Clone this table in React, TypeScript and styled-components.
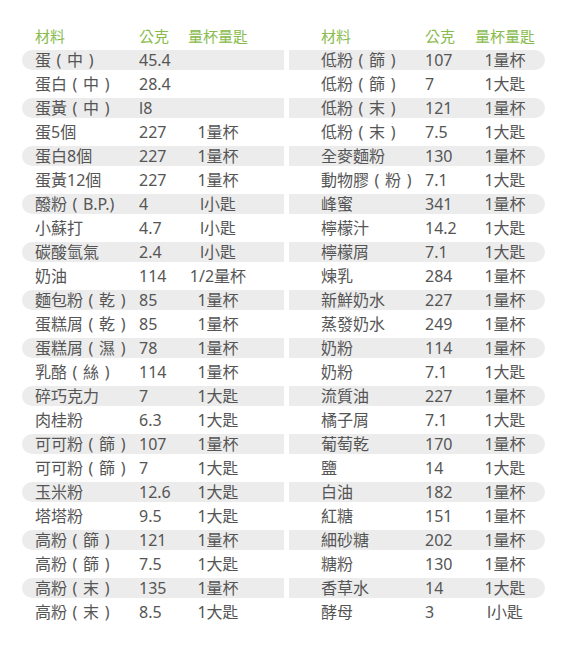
import React from 'react';
import styled, {createGlobalStyle} from 'styled-components';

type Item = [string, string, string]

const leftItems: Item[] = [
    ['蛋（中）', '45.4', ''],
    ['蛋白（中）', '28.4', ''],
    ['蛋黃（中）', 'l8', ''],
    ['蛋5個', '227', '1量杯'],
    ['蛋白8個', '227', '1量杯'],
    ['蛋黃12個', '227', '1量杯'],
    ['醱粉（B.P.)', '4', 'l小匙'],
    ['小蘇打', '4.7', 'l小匙'],
    ['碳酸氫氣', '2.4', 'l小匙'],
    ['奶油', '114', '1/2量杯'],
    ['麵包粉（乾）', '85', '1量杯'],
    ['蛋糕屑（乾）', '85', '1量杯'],
    ['蛋糕屑（濕）', '78', '1量杯'],
    ['乳酪（絲）', '114', '1量杯'],
    ['碎巧克力', '7', '1大匙'],
    ['肉桂粉', '6.3', '1大匙'],
    ['可可粉（篩）', '107', '1量杯'],
    ['可可粉（篩）', '7', '1大匙'],
    ['玉米粉', '12.6', '1大匙'],
    ['塔塔粉', '9.5', '1大匙'],
    ['高粉（篩）', '121', '1量杯'],
    ['高粉（篩）', '7.5', '1大匙'],
    ['高粉（末）', '135', '1量杯'],
    ['高粉（末）', '8.5', '1大匙'],
]

const rightItems: Item[] = [
    ['低粉（篩）', '107', '1量杯'],
    ['低粉（篩）', '7', '1大匙'],
    ['低粉（末）', '121', '1量杯'],
    ['低粉（末）', '7.5', '1大匙'],
    ['全麥麵粉', '130', '1量杯'],
    ['動物膠（粉）', '7.1', '1大匙'],
    ['峰蜜', '341', '1量杯'],
    ['檸檬汁', '14.2', '1大匙'],
    ['檸檬屑', '7.1', '1大匙'],
    ['煉乳', '284', '1量杯'],
    ['新鮮奶水', '227', '1量杯'],
    ['蒸發奶水', '249', '1量杯'],
    ['奶粉', '114', '1量杯'],
    ['奶粉', '7.1', '1大匙'],
    ['流質油', '227', '1量杯'],
    ['橘子屑', '7.1', '1大匙'],
    ['葡萄乾', '170', '1量杯'],
    ['鹽', '14', '1大匙'],
    ['白油', '182', '1量杯'],
    ['紅糖', '151', '1量杯'],
    ['細砂糖', '202', '1量杯'],
    ['糖粉', '130', '1量杯'],
    ['香草水', '14', '1大匙'],
    ['酵母', '3', 'l小匙'],
]

type Side = 'left' | 'right'

const columns: Record<Side, string> = {
    left: '104px 45px 68px 32px',
    right: '104px 45px 70px 5px',
}

// full-width brackets drawn centred in their cell, like the source font does
const Name = ({text}: { text: string }) => {
    const parts = text.split(/([（）])/)
    return (
        <>
            {parts.map((p, i) => p === '（' || p === '）'
                ? <Paren key={i}>{p === '（' ? '(' : ')'}</Paren>
                : <React.Fragment key={i}>{p}</React.Fragment>)}
        </>
    )
}

const TablePart = ({side, items}: { side: Side, items: Item[] }) => {
    return (
        <Table side={side}>
            <Row side={side}>
                <HeadCell>材料</HeadCell>
                <HeadCell>公克</HeadCell>
                <HeadCell center>量杯量匙</HeadCell>
            </Row>
            {items.map((item, i) => (
                <Row key={i} side={side} shaded={i % 2 === 0}>
                    <Cell><Name text={item[0]}/></Cell>
                    <Cell>{item[1]}</Cell>
                    <Cell center>{item[2]}</Cell>
                </Row>
            ))}
        </Table>
    );
};

export default function App() {
    return (
        <>
            <GlobalStyle/>
            <Page>
                <TablePart side={'left'} items={leftItems}/>
                <TablePart side={'right'} items={rightItems}/>
            </Page>
        </>
    );
}

const GlobalStyle = createGlobalStyle`
  body {
    margin: 0;
    background: #fff;
    font-family: "Noto Sans", "Noto Sans CJK TC", sans-serif;
  }
`

const Page = styled.div`
  display: flex;
  gap: 5px;
  padding: 24px 0 0 22px;
`

const Table = styled.div<{side: Side}>`
  display: grid;
  grid-auto-rows: 24px;
  align-items: center;
  width: ${props => props.side === 'left' ? '262px' : '256px'};
`

const Row = styled.div<{side: Side, shaded?: boolean}>`
  display: grid;
  grid-template-columns: ${props => columns[props.side]};
  align-items: center;
  height: 20px;
  padding-left: ${props => props.side === 'left' ? '13px' : '32px'};
  background: ${props => props.shaded ? '#ececec' : 'transparent'};
  border-radius: ${props => props.side === 'left' ? '10px 0 0 10px' : '0 10px 10px 0'};
  font-size: 16px;
  color: #555;
  white-space: nowrap;
`

const Cell = styled.div<{center?: boolean}>`
  text-align: ${props => props.center ? 'center' : 'left'};
  line-height: 20px;
`

const HeadCell = styled(Cell)`
  font-size: 15px;
  color: #88bb4c;
`

const Paren = styled.span`
  display: inline-block;
  width: 16px;
  text-align: center;
`
